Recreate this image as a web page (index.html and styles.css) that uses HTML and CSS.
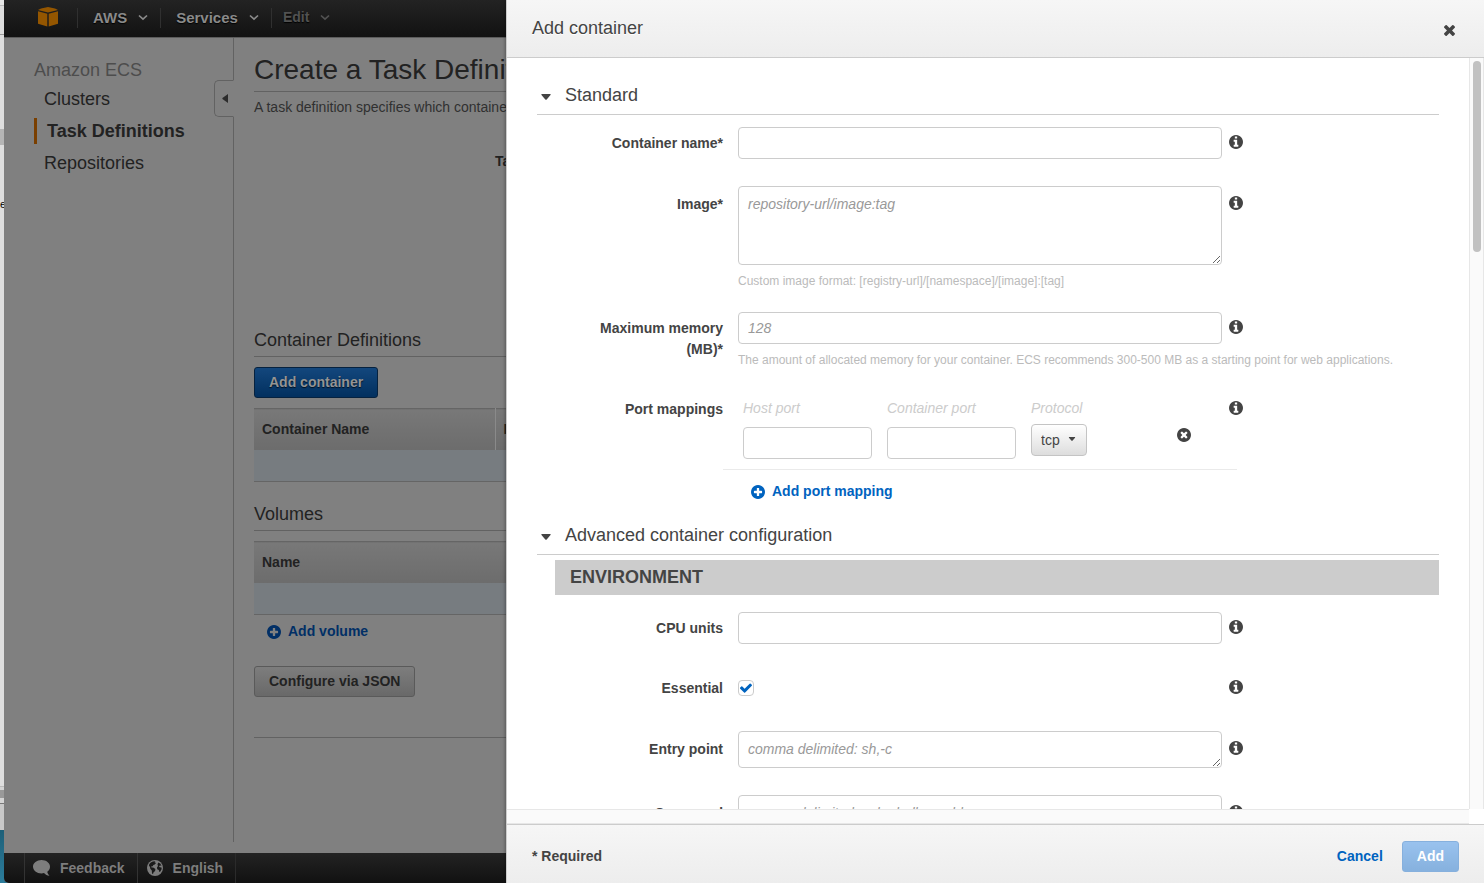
FILE: index.html
```html
<!DOCTYPE html>
<html lang="en">
<head>
<meta charset="utf-8">
<title>Amazon ECS</title>
<link rel="stylesheet" href="styles.css">
</head>
<body>
<svg class="sprite" aria-hidden="true">
  <symbol id="i-info" viewBox="0 128 1536 1536"><path d="M1024 1376v-160q0-14-9-23t-23-9h-96v-512q0-14-9-23t-23-9h-320q-14 0-23 9t-9 23v160q0 14 9 23t23 9h96v320h-96q-14 0-23 9t-9 23v160q0 14 9 23t23 9h448q14 0 23-9t9-23zm-128-896v-160q0-14-9-23t-23-9h-192q-14 0-23 9t-9 23v160q0 14 9 23t23 9h192q14 0 23-9t9-23zm640 416q0 209-103 385.5t-279.5 279.5-385.5 103-385.5-103-279.5-279.5-103-385.5 103-385.5 279.5-279.5 385.5-103 385.5 103 279.5 279.5 103 385.5z"/></symbol>
  <symbol id="i-plus" viewBox="0 128 1536 1536"><path d="M1216 960v-128q0-26-19-45t-45-19h-256v-256q0-26-19-45t-45-19h-128q-26 0-45 19t-19 45v256h-256q-26 0-45 19t-19 45v128q0 26 19 45t45 19h256v256q0 26 19 45t45 19h128q26 0 45-19t19-45v-256h256q26 0 45-19t19-45zm320-64q0 209-103 385.5t-279.5 279.5-385.5 103-385.5-103-279.5-279.5-103-385.5 103-385.5 279.5-279.5 385.5-103 385.5 103 279.5 279.5 103 385.5z"/></symbol>
  <symbol id="i-remove" viewBox="0 128 1536 1536"><path d="M1149 1122q0-26-19-45l-181-181 181-181q19-19 19-45 0-27-19-46l-90-90q-19-19-46-19-26 0-45 19l-181 181-181-181q-19-19-45-19-27 0-46 19l-90 90q-19 19-19 46 0 26 19 45l181 181-181 181q-19 19-19 45 0 27 19 46l90 90q19 19 46 19 26 0 45-19l181-181 181 181q19 19 45 19 27 0 46-19l90-90q19-19 19-46zm387-226q0 209-103 385.5t-279.5 279.5-385.5 103-385.5-103-279.5-279.5-103-385.5 103-385.5 279.5-279.5 385.5-103 385.5 103 279.5 279.5 103 385.5z"/></symbol>
  <symbol id="i-close" viewBox="302 366 1188 1188"><path d="M1490 1322q0 40-28 68l-136 136q-28 28-68 28t-68-28l-294-294-294 294q-28 28-68 28t-68-28l-136-136q-28-28-28-68t28-68l294-294-294-294q-28-28-28-68t28-68l136-136q28-28 68-28t68 28l294 294 294-294q28-28 68-28t68 28l136 136q28 28 28 68t-28 68l-294 294 294 294q28 28 28 68z"/></symbol>
  <symbol id="i-check" viewBox="121 300 1550 1222"><path d="M1671 566q0 40-28 68l-724 724-136 136q-28 28-68 28t-68-28l-136-136-362-362q-28-28-28-68t28-68l136-136q28-28 68-28t68 28l294 295 656-657q28-28 68-28t68 28l136 136q28 28 28 68z"/></symbol>
  <symbol id="i-chevron" viewBox="0 0 10 7"><path d="M1 1.500 5 5.200 9 1.500" fill="none" stroke="currentColor" stroke-width="1.7"/></symbol>
  <symbol id="i-caret" viewBox="0 0 10 6"><path d="M.8 0h8.400q.8.2.3 1L5.700 5.500q-.7.6-1.400 0L.5 1Q0 .2.8 0z"/></symbol>
</svg>

<div class="desktop">
  <div class="backdrop" aria-hidden="true"><span>e</span></div>
  <div class="app">
    <header class="topbar">
      <a class="topbar-logo" href="#" aria-label="AWS home">
        <svg width="20" height="20" viewBox="0 0 20 20"><path d="M3 1.500 10 0l7 1.500L20 3l-10 2.600L0 3z"/><path d="M0 4.200 9.300 6.700V19.400L0 16.700zM20 4.200 10.700 6.700V19.400L20 16.700z"/></svg>
      </a>
      <button class="topbar-item" type="button">AWS <svg class="chevron"><use href="#i-chevron"/></svg></button>
      <button class="topbar-item" type="button">Services <svg class="chevron"><use href="#i-chevron"/></svg></button>
      <button class="topbar-item topbar-edit" type="button">Edit <svg class="chevron"><use href="#i-chevron"/></svg></button>
    </header>

    <div class="workspace">
      <nav class="sidebar">
        <h2 class="sidebar-title">Amazon ECS</h2>
        <a class="sidebar-link" href="#">Clusters</a>
        <a class="sidebar-link is-active" href="#">Task Definitions</a>
        <a class="sidebar-link" href="#">Repositories</a>
        <button class="sidebar-toggle" type="button" aria-label="Collapse sidebar"><svg width="6" height="9" viewBox="0 0 6 9"><path d="M6 0v9L.4 4.900V4.100z"/></svg></button>
      </nav>
      <main class="page">
        <h1 class="page-title">Create a Task Definition</h1>
        <p class="page-intro">A task definition specifies which containers</p>
        <div class="page-name">Task Definition Name*</div>

        <h2 class="page-heading">Container Definitions</h2>
        <button class="btn btn-primary" type="button">Add container</button>
        <table class="grid">
          <thead><tr><th class="grid-name">Container Name</th><th>Image</th></tr></thead>
          <tbody><tr><td></td><td></td></tr></tbody>
        </table>

        <h2 class="page-heading page-heading-volumes">Volumes</h2>
        <table class="grid">
          <thead><tr><th>Name</th></tr></thead>
          <tbody><tr><td></td></tr></tbody>
        </table>
        <a class="add-link add-volume" href="#"><svg class="icon"><use href="#i-plus"/></svg>Add volume</a>
        <button class="btn btn-plain" type="button">Configure via JSON</button>
        <hr class="page-rule">
      </main>
    </div>

    <footer class="bottombar">
      <a class="bottombar-item" href="#"><svg width="17" height="16" viewBox="0 0 17 16"><path d="M8.500 0C13.200 0 17 2.900 17 6.700c0 2-1 3.800-2.700 5 .1 1.500.9 2.700 2.200 4-2.300-.1-4.200-.9-5.500-2.600-.8.200-1.600.3-2.500.3C3.800 13.400 0 10.400 0 6.700S3.800 0 8.500 0z"/></svg>Feedback</a>
      <a class="bottombar-item" href="#"><svg width="16" height="16" viewBox="0 0 16 16"><circle cx="8" cy="8" r="8"/><path class="land" d="M2.200 4.300 3.800 2.500l2-1.100 2.600-.2-.8 1 1.400.7-1.200 1.500-1.500.5-.5 1.300-1.700.2.500 1 1.600.1 2.200 1.600-.3 1.900-1.500 1.300-.6 1.800-1-.5-.2-3-1.500-1.800-.3-1.900-1-1.200zM11.200 2.400l2 1 1.300 2.400-1.600-.2-.9.700.8 1 1.700.1.200 1.500-1.300 2.700-1.100.4-.5-2-1.600-.8-.2-1.800 1-1.300-.5-1.500z"/></svg>English</a>
    </footer>
  </div>

  <section class="drawer" role="dialog" aria-labelledby="drawer-title">
    <header class="drawer-header">
      <h2 class="drawer-title" id="drawer-title">Add container</h2>
      <button class="icon-btn" type="button" aria-label="Close"><svg class="icon-close"><use href="#i-close"/></svg></button>
    </header>

    <div class="scroller">
      <form class="drawer-body" id="container-form">
        <h3 class="section-heading"><button type="button"><svg class="caret"><use href="#i-caret"/></svg>Standard</button></h3>
        <div class="fields">
          <div class="field">
            <label for="name">Container name*</label>
            <input class="text" id="name" type="text">
            <button class="icon-btn info" type="button" aria-label="About container name"><svg class="icon"><use href="#i-info"/></svg></button>
          </div>
          <div class="field field-area has-hint">
            <label for="image">Image*</label>
            <textarea class="text area-tall" id="image" placeholder="repository-url/image:tag"></textarea>
            <button class="icon-btn info" type="button" aria-label="About image"><svg class="icon"><use href="#i-info"/></svg></button>
            <p class="hint">Custom image format: [registry-url]/[namespace]/[image]:[tag]</p>
          </div>
          <div class="field has-hint">
            <label for="memory">Maximum memory<br>(MB)*</label>
            <input class="text" id="memory" type="text" placeholder="128">
            <button class="icon-btn info" type="button" aria-label="About maximum memory"><svg class="icon"><use href="#i-info"/></svg></button>
            <p class="hint">The amount of allocated memory for your container. ECS recommends 300-500 MB as a starting point for web applications.</p>
          </div>
          <div class="field field-area">
            <span class="field-label">Port mappings</span>
            <div class="ports">
              <div class="ports-row">
                <div class="port"><label for="host">Host port</label><input class="text" id="host" type="text"></div>
                <div class="port"><label for="cport">Container port</label><input class="text" id="cport" type="text"></div>
                <div class="port port-protocol"><label for="proto">Protocol</label>
                  <div class="select"><select id="proto"><option>tcp</option><option>udp</option></select><svg class="select-caret"><use href="#i-caret"/></svg></div>
                </div>
                <button class="icon-btn remove" type="button" aria-label="Remove port mapping"><svg class="icon"><use href="#i-remove"/></svg></button>
              </div>
              <a class="add-link" href="#"><svg class="icon"><use href="#i-plus"/></svg>Add port mapping</a>
            </div>
            <button class="icon-btn info" type="button" aria-label="About port mappings"><svg class="icon"><use href="#i-info"/></svg></button>
          </div>
        </div>

        <h3 class="section-heading"><button type="button"><svg class="caret"><use href="#i-caret"/></svg>Advanced container configuration</button></h3>
        <h4 class="band">ENVIRONMENT</h4>
        <div class="fields">
          <div class="field">
            <label for="cpu">CPU units</label>
            <input class="text" id="cpu" type="text">
            <button class="icon-btn info" type="button" aria-label="About CPU units"><svg class="icon"><use href="#i-info"/></svg></button>
          </div>
          <div class="field field-check">
            <label for="essential">Essential</label>
            <span class="check"><input id="essential" type="checkbox" checked><svg><use href="#i-check"/></svg></span>
            <button class="icon-btn info" type="button" aria-label="About essential"><svg class="icon"><use href="#i-info"/></svg></button>
          </div>
          <div class="field field-area">
            <label for="entry">Entry point</label>
            <textarea class="text area-short" id="entry" placeholder="comma delimited: sh,-c"></textarea>
            <button class="icon-btn info" type="button" aria-label="About entry point"><svg class="icon"><use href="#i-info"/></svg></button>
          </div>
          <div class="field field-area">
            <label for="command">Command</label>
            <textarea class="text area-short" id="command" placeholder="comma delimited: echo,hello world"></textarea>
            <button class="icon-btn info" type="button" aria-label="About command"><svg class="icon"><use href="#i-info"/></svg></button>
          </div>
        </div>
      </form>
      <div class="track track-y" aria-hidden="true"><div class="thumb"></div></div>
      <div class="track track-x" aria-hidden="true"></div>
    </div>

    <footer class="drawer-footer">
      <span class="required">* Required</span>
      <a class="cancel" href="#">Cancel</a>
      <button class="btn btn-add" type="submit" form="container-form">Add</button>
    </footer>
  </section>
</div>
</body>
</html>
```

FILE: styles.css
```css
*, *::before, *::after { box-sizing: border-box; }
html, body { height: 100%; margin: 0; }
body {
  font: 14px/21px "Liberation Sans", Arial, sans-serif;
  color: #444;
  overflow: hidden;
}
h1, h2, h3, h4, p { margin: 0; font-weight: normal; }
a { text-decoration: none; color: inherit; }
button, input, textarea, select { font: inherit; color: inherit; }
button { border: 0; background: none; padding: 0; }
svg { fill: currentColor; display: block; flex: none; }
.sprite { display: none; }
.icon { width: 14px; height: 14px; }
.icon-btn { display: flex; align-items: center; }

.desktop { position: relative; display: flex; height: 100%; background: #2a7592; }

/* windows behind the browser */
.backdrop {
  width: 4px;
  overflow: hidden;
  padding-top: 194px;
  color: #000;
  font-size: 11px;
  background: linear-gradient(#e6e6e6 0 5px, #bbb 5px 6px, #ddd 6px 34px, #999 34px 35px,
    #dedede 35px 129px, #b5b5b5 129px 145px, #dedede 145px 786px, #bbb 786px 787px,
    #d4d4d4 787px 790px, #999 790px 798px, #d4d4d4 798px 803px, #777 803px 804px,
    #c8c8c8 804px 830px, #1d5f78 830px, #2c7d9c 883px);
}
.backdrop span { display: block; }

.app {
  flex: 1;
  min-width: 0;
  display: flex;
  flex-direction: column;
  background: #808080;
  color: #222;
  border-bottom-left-radius: 5px;
  overflow: hidden;
}

/* top bar */
.topbar {
  display: flex;
  align-items: center;
  height: 38px;
  flex: none;
  border-bottom: 1px solid #5c5c5c;
  background: linear-gradient(#232323, #121212);
  color: #8a8a8a;
}
.topbar-logo { width: 73px; padding-left: 34px; padding-bottom: 4px; color: #945600; }
.topbar-item {
  display: flex;
  align-items: center;
  gap: 11px;
  height: 20px;
  padding: 0 12px 0 15px;
  border-left: 1px solid #303030;
  margin-bottom: 2px;
  font-size: 15px;
  font-weight: bold;
  text-shadow: 0 1px 1px #000;
}
.topbar-edit { color: #525252; font-size: 14px; padding-left: 11px; }
.chevron { width: 10px; height: 7px; }

/* sidebar */
.workspace { flex: 1; min-height: 0; display: flex; padding-bottom: 11px; }
.sidebar {
  position: relative;
  width: 230px;
  flex: none;
  padding: 18px 0 0 30px;
  border-right: 1px solid #626262;
  font-size: 18px;
}
.sidebar-title { font-size: 18px; line-height: 28px; color: #4d4d4d; }
.sidebar-link { display: block; line-height: 26px; margin: 2px 0 6px; padding-left: 10px; }
.sidebar-link.is-active { border-left: 3px solid #7a3f00; font-weight: bold; }
.sidebar-toggle {
  position: absolute;
  top: 42px;
  right: -1px;
  width: 20px;
  height: 37px;
  padding-left: 7px;
  border: 1px solid #626262;
  border-right-color: #808080;
  border-radius: 5px 0 0 5px;
  background: #808080;
  color: #2c2c2c;
}

/* page */
.page { flex: 1; min-width: 0; padding: 12px 20px 0; }
.page-title { padding-bottom: 2px; font-size: 28px; line-height: 39px; border-bottom: 1px solid #626262; white-space: nowrap; }
.page-intro { margin-top: 5px; color: #303030; white-space: nowrap; }
.page-name { margin: 33px 0 0 241px; font-weight: bold; }
.page-heading { margin-top: 155px; padding-bottom: 2px; font-size: 18px; line-height: 27px; border-bottom: 1px solid #626262; }
.page-heading-volumes { margin-top: 19px; }

.btn {
  display: block;
  height: 31px;
  padding: 0 14px;
  border: 1px solid;
  border-radius: 3px;
  font-weight: bold;
}
.btn-primary {
  margin-top: 10px;
  border-color: #06223f;
  background: linear-gradient(#13477d, #02305f);
  color: #949494;
  text-shadow: 0 1px 1px #001020;
}
.btn-plain {
  margin-top: 24px;
  border-color: #5a5a5a;
  background: linear-gradient(#7d7d7d, #696969);
}

.grid {
  width: 100%;
  margin-top: 10px;
  border-collapse: collapse;
  table-layout: fixed;
  border-top: 1px solid #656565;
  border-bottom: 1px solid #656565;
}
.grid th {
  height: 41px;
  padding: 0 8px;
  text-align: left;
  background: linear-gradient(#787878, #6c6c6c);
}
.grid-name { width: 241px; }
.grid-name + th { border-left: 1px solid #8a8a8a; }
.grid td { height: 32px; padding: 0; background: #777c80; }

.add-link { display: flex; align-items: center; gap: 7px; font-weight: bold; color: #0063bf; }
.add-volume { margin: 6px 0 0 13px; color: #012f66; }
.page-rule { margin: 40px 0 0; border: 0; border-top: 1px solid #626262; }

/* bottom bar */
.bottombar {
  flex: none;
  display: flex;
  height: 30px;
  padding-left: 20px;
  background: linear-gradient(#232323, #111);
  color: #7d7d7d;
  font-weight: bold;
}
.bottombar-item { display: flex; align-items: center; gap: 10px; padding: 0 12px 0 8px; border-left: 1px solid #333; }
.bottombar-item:last-child { padding-left: 9px; border-right: 1px solid #2b2b2b; }
.land { fill: #1a1a1a; }

/* drawer */
.drawer {
  position: absolute;
  inset: 0 0 0 506px;
  display: flex;
  flex-direction: column;
  background: #fff;
  border-left: 1px solid #ccc;
  box-shadow: 0 0 4px rgba(0, 0, 0, .5);
}
.drawer-header {
  flex: none;
  display: flex;
  align-items: center;
  justify-content: space-between;
  height: 58px;
  padding: 0 29px 0 25px;
  border-bottom: 1px solid #ccc;
  background: linear-gradient(#f6f6f6, #ededed);
}
.drawer-title { font-size: 18px; text-shadow: 0 1px #fff; }
.icon-close { width: 11px; height: 11px; margin-top: 4px; }

.scroller {
  flex: 1;
  min-height: 0;
  display: grid;
  grid-template: minmax(0, 1fr) 15px / minmax(0, 1fr) 15px;
}
.drawer-body { overflow-y: auto; scrollbar-width: none; padding: 17px 30px 0; }
.track { background: #fafafa; }
.track-y { padding: 3px 2px 0 3px; border: solid #e7e7e7; border-width: 0 1px; }
.track-x { border: solid #e7e7e7; border-width: 1px 0; }
.thumb { width: 8px; height: 191px; border-radius: 4px; background: #c1c1c1; }

.section-heading { border-bottom: 1px solid #ccc; }
.section-heading button {
  display: flex;
  align-items: center;
  gap: 14px;
  width: 100%;
  height: 39px;
  padding: 2px 0 0 4px;
  font-size: 18px;
}
.caret { width: 10px; height: 6px; margin-top: 2px; }

.fields { display: flex; flex-direction: column; padding: 12px 0; }
.field {
  display: grid;
  grid-template-columns: 201fr 484fr 217fr;
  align-items: start;
  margin-bottom: 27px;
}
.field:last-child { margin-bottom: 0; }
.field.has-hint { margin-bottom: 21px; }
.field > label, .field-label { padding: 6px 15px 0 0; text-align: right; font-weight: bold; }
.info { padding: 8px 0 0 7px; }
.field-area > label, .field-area > .field-label { padding-top: 8px; }
.field-area > .info { padding-top: 10px; }
.field-check { padding-top: 1px; min-height: 33px; }
.hint {
  grid-column: 2 / 4;
  margin-top: 6px;
  font-size: 12px;
  line-height: 20px;
  color: #bbb;
  white-space: nowrap;
}
.field > label:has(br) { grid-row: 1 / 3; }

.text {
  display: block;
  width: 100%;
  min-width: 0;
  height: 32px;
  padding: 0 9px;
  border: 1px solid #ccc;
  border-radius: 4px;
  background: #fff;
}
textarea.text { padding: 7px 9px; resize: vertical; }
textarea.area-tall { height: 79px; }
textarea.area-short { height: 37px; }
.text::placeholder { color: #999; font-style: italic; }

.ports { margin: 0 -15px; }
.ports-row {
  display: grid;
  grid-template-columns: minmax(0, 129px) minmax(0, 129px) 56px 1fr;
  column-gap: 15px;
  padding: 7px 46px 10px 20px;
  border-bottom: 1px solid #eaeaea;
}
.port { display: flex; flex-direction: column; gap: 8px; }
.port-protocol { gap: 5px; }
.port label { font-style: italic; color: #ccc; white-space: nowrap; }
.remove { justify-self: end; align-self: start; padding-top: 30px; }
.ports .add-link { padding: 11px 28px 1px; }

.select { position: relative; }
.select select {
  appearance: none;
  width: 100%;
  height: 32px;
  padding: 0 9px;
  border: 1px solid #c4c4c4;
  border-radius: 4px;
  background: linear-gradient(#fff, #ddd);
}
.select-caret { position: absolute; right: 11px; top: 13px; width: 8px; height: 4px; pointer-events: none; }

.band {
  margin: 5px 0 5px 18px;
  padding-left: 15px;
  background: #ccc;
  font-size: 18px;
  font-weight: bold;
  line-height: 35px;
}

.check { position: relative; width: 16px; height: 16px; margin-top: 8px; }
.check input {
  appearance: none;
  display: block;
  width: 16px;
  height: 16px;
  margin: 0;
  border: 1px solid #ccc;
  border-radius: 4px;
}
.check svg { position: absolute; left: 2px; top: 3px; width: 12px; height: 10px; color: #0063bf; pointer-events: none; }

.drawer-footer {
  flex: none;
  display: flex;
  align-items: center;
  gap: 19px;
  height: 59px;
  padding: 4px 25px 0;
  border-top: 1px solid #ccc;
  background: linear-gradient(#f6f6f6, #ededed);
  font-weight: bold;
}
.required { margin-right: auto; }
.cancel { color: #0063bf; }
.btn-add {
  border-color: #86b0dd;
  background: linear-gradient(#99c2ee, #86b1de);
  color: #fff;
}
```
